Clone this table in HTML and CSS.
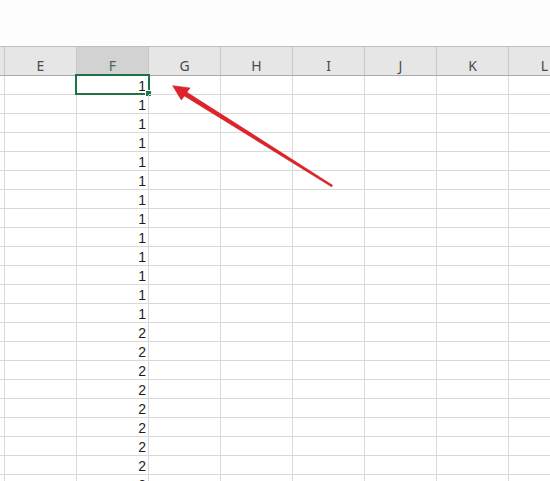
FILE: index.html
```html
<!doctype html>
<html lang="en">
  <head>
    <meta charset="UTF-8" />
    <title>Sheet</title>
    <link rel="stylesheet" href="styles.css">
  </head>
  <body>
    <div class="ribbon"></div>

    <div class="sheet">
      <!-- Column headers -->
      <div class="row head">
        <div class="cell"></div>
        <div class="cell">E</div>
        <div class="cell active">F</div>
        <div class="cell">G</div>
        <div class="cell">H</div>
        <div class="cell">I</div>
        <div class="cell">J</div>
        <div class="cell">K</div>
        <div class="cell">L</div>
      </div>
      <div id="rows"></div>
    </div>

    <!-- Red annotation arrow pointing at F1 -->
    <svg class="arrow" width="550" height="481" viewBox="0 0 550 481">
      <polygon
        points="172.7,85.7 190,88 186.8,92.2 332.5,185.2 331.6,186.8 184.4,95.9 181.3,100"
        fill="#e1222a"
        stroke="#c81d24"
        stroke-width="0.6"
        stroke-linejoin="round"
      />
    </svg>

    <script>
      // Column F values, the rest of the row is empty
      const values = [1, 1, 1, 1, 1, 1, 1, 1, 1, 1, 1, 1, 1, 2, 2, 2, 2, 2, 2, 2, 2, 2];
      const rows = document.getElementById("rows");

      values.forEach((v, i) => {
        const row = document.createElement("div");
        row.className = "row";
        for (let c = 0; c < 9; c++) {
          const cell = document.createElement("div");
          cell.className = "cell";
          if (c === 2) {
            cell.textContent = v;
            if (i === 0) {
              const sel = document.createElement("div");
              sel.className = "selection";
              sel.innerHTML = '<span class="handle"></span>';
              cell.appendChild(sel);
            }
          }
          row.appendChild(cell);
        }
        rows.appendChild(row);
      });
    </script>
  </body>
</html>
```

FILE: styles.css
```css
/* Colours taken from the spreadsheet grid */
:root {
  --grid: #d9d9d9;
  --head-bg: #e6e6e6;
  --head-active: #d2d2d2;
  --green: #217346;
}

body {
  margin: 0;
  background: #fdfdfd;
  overflow: hidden;
  height: 481px;
  position: relative;
}

/* Blank ribbon strip above the grid */
.ribbon {
  height: 46px;
}

.sheet {
  overflow: hidden;
}

/* Grid - partial column D, then E..L (L runs off the right edge) */
.row {
  display: grid;
  grid-template-columns: 5px repeat(8, 72px);
  height: 19px;
  background: #ffffff;
}

.cell {
  box-sizing: border-box;
  border-right: 1px solid var(--grid);
  border-bottom: 1px solid var(--grid);
  position: relative;
  display: flex;
  align-items: flex-end;
  justify-content: flex-end;
  padding-right: 2px;
  font-family: "Liberation Sans", Arial, sans-serif;
  font-size: 14px;
  line-height: 16px;
  color: #1c1c1c;
}

/* Header row */
.row.head {
  height: 30px;
  background: var(--head-bg);
  border-top: 1px solid #bdbdbd;
  border-bottom: 1px solid #ababab;
  box-sizing: border-box;
}

.head .cell {
  border-bottom: none;
  border-right-color: #c8c8c8;
  justify-content: center;
  padding: 0 0 1px 0;
  font-family: "Noto Sans", sans-serif;
  font-size: 14px;
  color: #4a4a4a;
}

.head .cell.active {
  background: var(--head-active);
  color: #3e6a4f;
}

/* Active cell outline with fill handle */
.selection {
  position: absolute;
  top: -2px;
  left: -2px;
  right: -2px;
  bottom: -1px;
  border: 2px solid var(--green);
}

.handle {
  position: absolute;
  right: -4px;
  bottom: -4px;
  width: 5px;
  height: 5px;
  background: var(--green);
  border: 1px solid #ffffff;
}

/* Annotation overlay */
.arrow {
  position: absolute;
  top: 0;
  left: 0;
  pointer-events: none;
}
```
